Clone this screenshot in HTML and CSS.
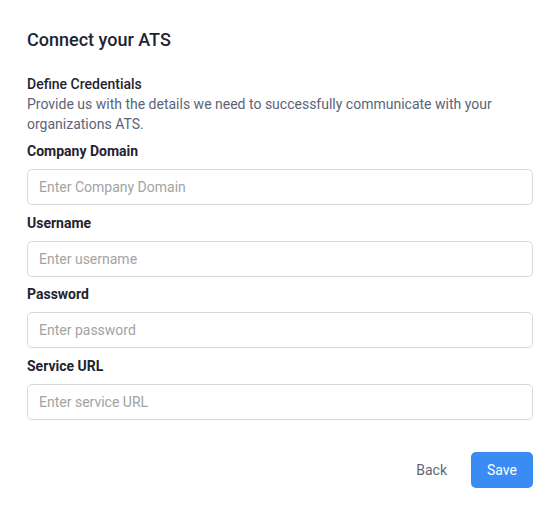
FILE: index.html
```html
<!DOCTYPE html>
<html lang="en">
<head>
<meta charset="utf-8">
<title>Connect your ATS</title>
<link rel="stylesheet" href="styles.css">
</head>
<body>
<div class="modal">
  <h1 class="title">Connect your ATS</h1>
  <div class="section">
    <h2 class="section-title">Define Credentials</h2>
    <p class="section-desc">Provide us with the details we need to successfully communicate with your organizations ATS.</p>
  </div>
  <form class="form">
    <div class="field">
      <label class="label" for="domain">Company Domain</label>
      <input class="input" id="domain" type="text" placeholder="Enter Company Domain">
    </div>
    <div class="field">
      <label class="label" for="user">Username</label>
      <input class="input" id="user" type="text" placeholder="Enter username">
    </div>
    <div class="field">
      <label class="label" for="pass">Password</label>
      <input class="input" id="pass" type="password" placeholder="Enter password">
    </div>
    <div class="field">
      <label class="label" for="url">Service URL</label>
      <input class="input" id="url" type="text" placeholder="Enter service URL">
    </div>
    <div class="actions">
      <button type="button" class="btn btn-back">Back</button>
      <button type="button" class="btn btn-save">Save</button>
    </div>
  </form>
</div>
</body>
</html>
```
FILE: styles.css
```css
* { box-sizing: border-box; }
html, body { margin: 0; padding: 0; background: #ffffff; }
body {
  font-family: Roboto, "Liberation Sans", Arial, sans-serif;
  color: #1f2937;
}
.modal {
  padding: 28px 26px 0 27px;
}
.title {
  margin: 0;
  font-size: 18px;
  line-height: 24px;
  font-weight: 500;
  color: #1f2430;
}
.section {
  margin-top: 22px;
}
.section-title {
  margin: 0;
  font-size: 14px;
  line-height: 20px;
  font-weight: 500;
  color: #1f2430;
}
.section-desc {
  margin: 0;
  font-size: 14px;
  line-height: 20px;
  color: #5b6478;
}
.form {
  display: flex;
  flex-direction: column;
  margin: 0;
}
.field {
  display: flex;
  flex-direction: column;
  margin-top: 7.67px;
}
.field:first-child {
  margin-top: 7px;
}
.label {
  font-size: 14px;
  line-height: 20px;
  font-weight: 700;
  color: #1f2430;
  margin-bottom: 8px;
}
.input {
  height: 36px;
  width: 100%;
  border: 1px solid #d9d9d9;
  border-radius: 5px;
  padding: 0 11px;
  font-family: inherit;
  font-size: 14px;
  color: #1f2430;
  background: #fff;
  outline: none;
}
.input::placeholder { color: #a3a3a3; }
.actions {
  display: flex;
  justify-content: flex-end;
  gap: 8px;
  margin-top: 32px;
}
.btn {
  height: 36px;
  padding: 0 16px;
  border: none;
  border-radius: 5px;
  font-family: inherit;
  font-size: 14px;
  cursor: pointer;
}
.btn-back {
  background: transparent;
  color: #5f6577;
}
.btn-save {
  background: #3a8bf3;
  color: #ffffff;
}
```
